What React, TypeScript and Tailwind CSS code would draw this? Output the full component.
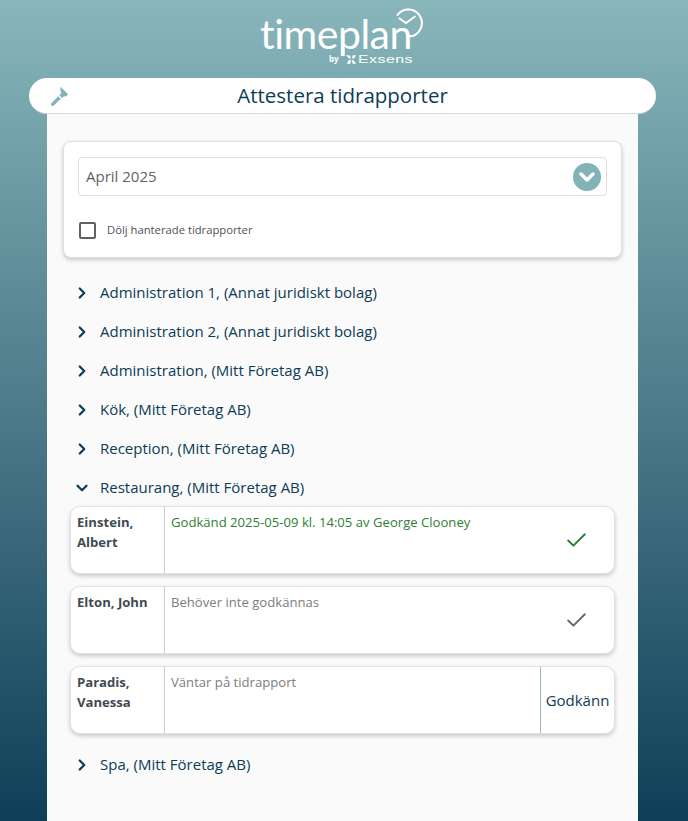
import { Check, ChevronDown, ChevronRight } from "lucide-react"

const groupsBefore = [
  "Administration 1, (Annat juridiskt bolag)",
  "Administration 2, (Annat juridiskt bolag)",
  "Administration, (Mitt Företag AB)",
  "Kök, (Mitt Företag AB)",
  "Reception, (Mitt Företag AB)",
]

function Group({ label, open }: { label: string; open?: boolean }) {
  return (
    <div className="flex h-[39px] items-center text-[15px] text-[#0d3c55]">
      <span className="flex w-[37px] justify-center">
        {open ? <ChevronDown size={18} strokeWidth={3} /> : <ChevronRight size={18} strokeWidth={3} />}
      </span>
      <span>{label}</span>
    </div>
  )
}

function Logo() {
  return (
    <div className="relative flex h-[78px] justify-center">
      <div className="relative mt-[7px] h-[60px] w-[164px] text-white">
        <span className="absolute -left-[2px] top-[8px] h-[38px] font-['Lato'] text-[41px] leading-[38px] tracking-[-0.5px]">
          timeplan
        </span>
        <svg className="absolute left-[130px] top-0" width="32" height="32" viewBox="0 0 32 32" fill="none" stroke="white" strokeWidth="2" strokeLinecap="round">
          <path d="M5.5 8A13.5 13.5 0 1 1 17 29.5" />
          <path d="M7.5 11.5l6.5 4.5 9-6.5" />
        </svg>
        <div className="absolute left-[67px] top-[46px] flex items-center text-[11px] leading-[12px]">
          <span className="mr-[7px] text-[8px] font-bold">by</span>
          <svg width="11" height="9" viewBox="0 0 13 10" fill="white" className="mr-[1px]">
            <path d="M0 0h4l2 3-2 1zM8 0h4L9 4 7 3zM3 6l2-1 1 2-1 3H1zM8 5l4 5H8L7 7z" />
          </svg>
          <span className="origin-left scale-x-[1.45] font-['Liberation_Sans'] tracking-[0.3px]">Exsens</span>
        </div>
      </div>
    </div>
  )
}

function PersonCard({
  name,
  status,
  statusColor,
  children,
}: {
  name: string
  status: string
  statusColor: string
  children: React.ReactNode
}) {
  return (
    <div className="flex h-[68px] overflow-hidden rounded-[10px] border border-[#e2e2e2] bg-white shadow-[0_2px_4px_rgba(0,0,0,0.2)]">
      <div className="w-[94px] shrink-0 border-r border-[#cfcfcf] px-[6px] py-[5px] text-[13.125px] font-bold leading-[20px] text-[#3f4a52]">
        {name}
      </div>
      <div className={`flex-1 px-[6px] py-[5px] text-[13.125px] leading-[20px] ${statusColor}`}>{status}</div>
      {children}
    </div>
  )
}

export default function App() {
  return (
    <div className="h-[821px] overflow-hidden bg-[linear-gradient(to_bottom,#88b6bb_0%,#0f3f58_100%)] font-['Open_Sans',sans-serif]">
      <Logo />
      <div className="relative ml-[47px] mr-[50px] h-[743px] bg-[#fafafa] px-[16px] pt-[63px]">
        <div className="absolute -left-[18px] -right-[18px] top-0 flex h-[36px] items-center justify-center rounded-[18px] border-b border-[#d8d8d8] bg-white">
          <svg className="absolute left-[20px] top-[6px] text-[#82b3b9]" width="24" height="24" viewBox="0 0 22 22" fill="currentColor">
            <path d="M10.5 2.5l7 7-2.2 2.2-1.3-.8-2 2-2.6-2.6 2-2-.8-1.3zM8.5 11.2l2.3 2.3-6.4 6.2c-.6.6-1.6.6-2.2 0s-.6-1.5 0-2.1z" />
          </svg>
          <span className="text-[20.5px] text-[#0d3c55]">Attestera tidrapporter</span>
        </div>

        <div className="h-[117px] rounded-[8px] border border-[#e0e0e0] bg-white px-[14px] pt-[15px] shadow-[0_2px_4px_rgba(0,0,0,0.2)]">
          <div className="flex h-[39px] items-center justify-between rounded-[4px] border border-[#dedede] pl-[7px] pr-[5px] text-[15px] text-[#5e6468]">
            April 2025
            <span className="flex h-[28px] w-[28px] items-center justify-center rounded-full bg-[#82b3b9] text-white">
              <ChevronDown size={24} strokeWidth={3.5} />
            </span>
          </div>
          <div className="mt-[26px] flex items-center pl-[1px] text-[11.25px] text-[#4a5157]">
            <span className="mr-[11px] h-[17px] w-[17px] rounded-[2px] border-2 border-[#5f6265]" />
            Dölj hanterade tidrapporter
          </div>
        </div>

        <div className="mt-[15px]">
          {groupsBefore.map((g) => (
            <Group key={g} label={g} />
          ))}
          <Group label="Restaurang, (Mitt Företag AB)" open />
        </div>

        <div className="ml-[7px] -mt-[1px] flex w-[545px] flex-col gap-[12px]">
          <PersonCard name="Einstein, Albert" status="Godkänd 2025-05-09 kl. 14:05 av George Clooney" statusColor="text-[#2f8032]">
            <span className="flex w-[76px] items-center justify-center text-[#2a7d2e]">
              <Check size={25} strokeWidth={1.8} />
            </span>
          </PersonCard>
          <PersonCard name="Elton, John" status="Behöver inte godkännas" statusColor="text-[#7d7d7d]">
            <span className="flex w-[76px] items-center justify-center text-[#666666]">
              <Check size={25} strokeWidth={1.8} />
            </span>
          </PersonCard>
          <PersonCard name="Paradis, Vanessa" status="Väntar på tidrapport" statusColor="text-[#7d7d7d]">
            <button className="w-[74px] rounded-r-[10px] border-l border-[#9db4bd] text-[15px] text-[#0d3c55]">Godkänn</button>
          </PersonCard>
        </div>

        <div className="mt-[11px]">
          <Group label="Spa, (Mitt Företag AB)" />
        </div>
      </div>
    </div>
  )
}
